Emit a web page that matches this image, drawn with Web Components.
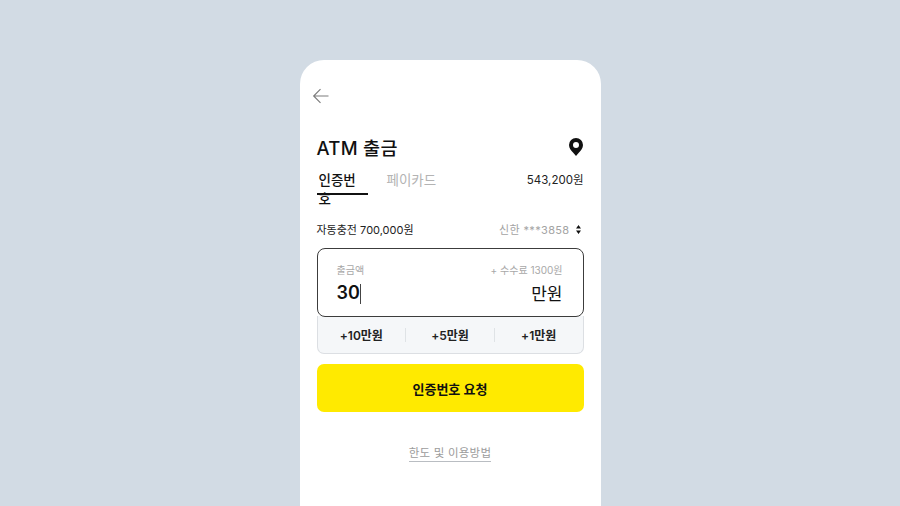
<!doctype html>
<html lang="ko"><head><meta charset="utf-8">
<style>
html,body{margin:0;height:506px;overflow:hidden;background:#d2dbe4;font-family:Inter,"Noto Sans CJK KR",sans-serif;color:#111}
body{display:flex;justify-content:center;padding-top:60px;box-sizing:border-box}
</style></head><body>
<atm-phone></atm-phone>
<script>
function def(name,css,html){
  customElements.define(name,class extends HTMLElement{
    constructor(){super();this.attachShadow({mode:'open'}).innerHTML='<style>'+css+'</style>'+html;}
  });
}
const font='font-family:Inter,"Noto Sans CJK KR",sans-serif;';
def('atm-header',`:host{display:block;${font}}
.back{display:block;height:24px;margin-left:12px}
.row{display:flex;justify-content:space-between;align-items:center;margin:27px 17px 0 17px;height:24px}
h1{margin:0;font-size:18.5px;font-weight:500;letter-spacing:.3px;color:#111}
svg{display:block}`,
`<svg class="back" width="18" height="24" viewBox="0 0 18 24" fill="none" stroke="#7d7d7d" stroke-width="1.2"><path d="M16.5 12H2M8.5 5.2 1.7 12l6.8 6.8"/></svg>
<div class="row"><h1>ATM 출금</h1><svg width="16" height="19" viewBox="0 0 16 19"><path fill="#111" fill-rule="evenodd" d="M8 0a7 7 0 0 1 7 7c0 3.2-2.2 5.4-4 7.6L8 18l-3-3.4C3.200 12.400 1 10.200 1 7a7 7 0 0 1 7-7Zm0 4.100a3 3 0 1 0 0 6 3 3 0 0 0 0-6Z"/></svg></div>`);
def('atm-tabs',`:host{display:flex;align-items:flex-start;margin:12px 17px 0;height:26px;${font}}
.t{font-size:13.500px;font-weight:500;padding:0 1px;height:24px;line-height:19px;box-sizing:border-box}
.on{color:#111;border-bottom:2px solid #111;height:24px;width:51px;padding:0 0 0 2px}
.off{color:#b3b3b3;margin-left:18px;font-weight:400}
.bal{margin-left:auto;font-size:11.500px;line-height:19px;color:#222}`,
`<span class="t on">인증번호</span><span class="t off">페이카드</span><span class="bal">543,200원</span>`);
def('atm-info',`:host{display:flex;justify-content:space-between;align-items:center;margin:22px 20px 0 17px;height:20px;font-size:11px;${font}}
.l{color:#222}.r{color:#a3a3a3;display:flex;align-items:center;gap:6px;letter-spacing:.35px}svg{display:block}`,
`<span class="l">자동충전 700,000원</span><span class="r">신한 ***3858<svg width="5" height="9" viewBox="0 0 5 9"><path fill="#111" d="M2.500 0 5 3.400H0ZM2.500 9 0 5.600h5Z"/></svg></span>`);
def('atm-amount',`:host{display:block;position:relative;z-index:1;box-sizing:border-box;height:69px;border:1px solid #3c3c3c;border-radius:8px;background:#fff;padding:13px 20px 0 19px;${font}}
.a,.b{display:flex;justify-content:space-between}
.a{font-size:10px;line-height:16px;color:#a8a8a8}
.b{align-items:center;height:26px;margin-top:1px;font-size:17px;color:#111}
.n{font-size:18px;font-weight:600;position:relative}
.n i{position:absolute;right:-1px;top:2px;width:1px;height:20px;background:#444}`,
`<div class="a"><span>출금액</span><span>+ 수수료 1300원</span></div><div class="b"><span class="n">30<i></i></span><span>만원</span></div>`);
def('atm-quick',`:host{display:flex;align-items:center;box-sizing:border-box;height:38px;margin-top:-1px;background:#f5f7f9;border:1px solid #dcdfe3;border-top:0;border-radius:0 0 7px 7px;font-size:12px;font-weight:600;${font}}
span{flex:1;text-align:center;color:#222}
i{width:1px;height:14px;background:#dfe3e6}`,
`<span>+10만원</span><i></i><span>+5만원</span><i></i><span>+1만원</span>`);
def('atm-submit',`:host{display:flex;align-items:center;justify-content:center;height:48px;margin-top:10px;background:#ffea00;border-radius:7px;font-size:13px;font-weight:600;color:#111;${font}}`,`<slot></slot>`);
def('atm-link',`:host{display:flex;justify-content:center;margin-top:33px;${font}}
span{font-size:11.500px;line-height:16px;color:#9c9c9c;border-bottom:1px solid #b9bdc2;letter-spacing:.2px}`,`<span><slot></slot></span>`);
def('atm-phone',`:host{display:block;width:301px;height:446px;background:#fff;border-radius:24px 24px 0 0;overflow:hidden;padding-top:24px;box-sizing:border-box;${font}}
.box{margin:0 17px}`,
`<atm-header></atm-header><atm-tabs></atm-tabs><atm-info></atm-info>
<div class="box" style="margin-top:9px"><atm-amount></atm-amount><atm-quick></atm-quick><atm-submit>인증번호 요청</atm-submit></div>
<atm-link>한도 및 이용방법</atm-link>`);
</script>
</body></html>
